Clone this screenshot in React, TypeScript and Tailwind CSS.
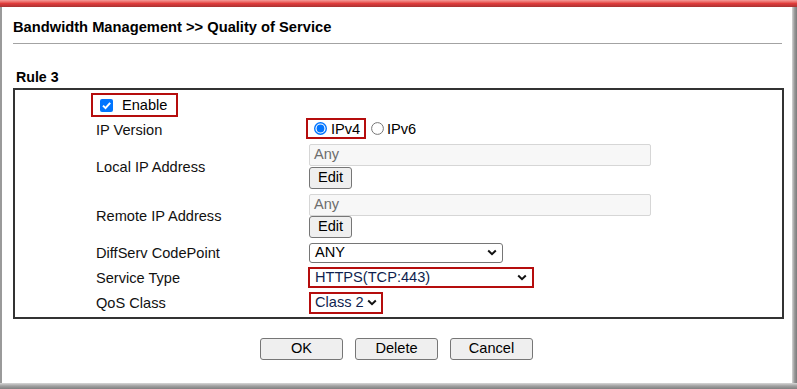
import React from "react";

const Chevron = () => (
  <svg width="10" height="7" viewBox="0 0 10 7" className="shrink-0">
    <path d="M1.2 1.5 L5 5.2 L8.8 1.5" fill="none" stroke="#111" strokeWidth="2" />
  </svg>
);

const Row = ({ label, h, children, align = "center" }: { label: string; h: string; children?: React.ReactNode; align?: string }) => (
  <div className={`flex ${h}`}>
    <div className="w-[294px] pl-[81px] flex items-center text-[14.6px] leading-[16px] text-[#111]">{label}</div>
    <div className={`flex-1 flex flex-col ${align === "start" ? "justify-start" : "justify-center"}`}>{children}</div>
  </div>
);

const Btn = ({ children, className = "" }: { children: React.ReactNode; className?: string }) => (
  <div className={`h-[22px] bg-[#efefef] border border-[#767676] rounded-[3px] flex items-center justify-center text-[14.6px] text-black ${className}`}>
    {children}
  </div>
);

const AnyInput = () => (
  <div className="w-[342px] h-[22px] bg-[#f7f7f7] border border-[#d6d6d6] rounded-[2px] flex items-center pl-[4px] text-[14.6px] text-[#6d6d6d]">
    Any
  </div>
);

export default function App() {
  return (
    <div className="w-[797px] h-[389px] flex flex-col bg-white overflow-hidden" style={{ fontFamily: '"Liberation Sans", Arial, sans-serif' }}>
      <div className="h-[7px] w-full bg-gradient-to-b from-[#f59a9a] via-[#e03b3b] to-[#a83232]" />
      <div className="flex flex-1 min-h-0">
        <div className="w-[2px] bg-[#9a9a9a]" />
        <div className="flex-1 flex flex-col pl-[11px] pr-[8px]">
          <div className="mt-[12px] text-[14.7px] leading-[17px] font-bold text-black">Bandwidth Management &gt;&gt; Quality of Service</div>
          <div className="mt-[7px] h-[1px] bg-[#a3a3a3] mr-[2px]" />
          <div className="mt-[25px] text-[14.2px] leading-[16px] font-bold text-black pl-[3px]">Rule 3</div>
          <div className="mt-[3px] border-2 border-[#333] pb-[2px]">
            <div className="h-[28px] pt-[3px] flex">
              <div className="ml-[76px] h-[24px] w-[87px] border-2 border-[#b50d0d] flex items-center pl-[7px]">
                <svg width="13" height="13" viewBox="0 0 13 13">
                  <rect x="0" y="0" width="13" height="13" rx="2" fill="#0075ff" />
                  <path d="M3 6.6 L5.5 9.1 L10.2 3.8" fill="none" stroke="#fff" strokeWidth="2" />
                </svg>
                <span className="ml-[9px] text-[14.6px] leading-[16px] text-black">Enable</span>
              </div>
            </div>
            <Row label="IP Version" h="h-[24px]" align="start">
              <div className="flex items-center">
                <div className="ml-[-3px] h-[21px] w-[60px] border-2 border-[#b50d0d] flex items-center pl-[6px]">
                  <svg width="13" height="13" viewBox="0 0 13 13">
                    <circle cx="6.5" cy="6.5" r="5.8" fill="#fff" stroke="#0075ff" strokeWidth="1.4" />
                    <circle cx="6.5" cy="6.5" r="3.9" fill="#0075ff" />
                  </svg>
                  <span className="ml-[4px] text-[14.6px] leading-[16px] text-black">IPv4</span>
                </div>
                <svg width="13" height="13" viewBox="0 0 13 13" className="ml-[5px]">
                  <circle cx="6.5" cy="6.5" r="5.9" fill="#fff" stroke="#767676" strokeWidth="1" />
                </svg>
                <span className="ml-[3px] text-[14.6px] leading-[16px] text-black">IPv6</span>
              </div>
            </Row>
            <Row label="Local IP Address" h="h-[49px]" align="start">
              <div className="pt-[2px] flex flex-col gap-[1px]">
                <AnyInput />
                <Btn className="w-[43px]">Edit</Btn>
              </div>
            </Row>
            <Row label="Remote IP Address" h="h-[49px]" align="start">
              <div className="pt-[3px] flex flex-col gap-[0px]">
                <AnyInput />
                <Btn className="w-[43px]">Edit</Btn>
              </div>
            </Row>
            <Row label="DiffServ CodePoint" h="h-[25px]">
              <div className="w-[194px] h-[20px] border border-[#767676] rounded-[3px] bg-white flex items-center justify-between pl-[5px] pr-[5px] text-[14.6px] text-black">
                <span>ANY</span>
                <Chevron />
              </div>
            </Row>
            <Row label="Service Type" h="h-[25px]">
              <div className="ml-[-1px] w-[226px] h-[21px] border-2 border-[#b50d0d] bg-white flex items-center justify-between pl-[5px] pr-[5px] text-[14.6px] text-[#0f1f4f]">
                <span>HTTPS(TCP:443)</span>
                <Chevron />
              </div>
            </Row>
            <Row label="QoS Class" h="h-[25px]">
              <div className="w-[74px] h-[22px] border-2 border-[#b50d0d] bg-white flex items-center pl-[4px] gap-[3px] text-[14.6px] text-[#0f1f4f]">
                <span>Class 2</span>
                <Chevron />
              </div>
            </Row>
          </div>
          <div className="mt-[19px] flex justify-center gap-[12px] pr-[4px]">
            <Btn className="w-[83px]">OK</Btn>
            <Btn className="w-[83px]">Delete</Btn>
            <Btn className="w-[83px]">Cancel</Btn>
          </div>
        </div>
        <div className="w-[5px] bg-gradient-to-r from-[#d6d6d6] via-[#9a9a9a] to-[#7a7a7a]" />
      </div>
      <div className="h-[6px] w-full bg-gradient-to-b from-[#d8d8d8] via-[#a0a0a0] to-[#808080]" />
    </div>
  );
}
